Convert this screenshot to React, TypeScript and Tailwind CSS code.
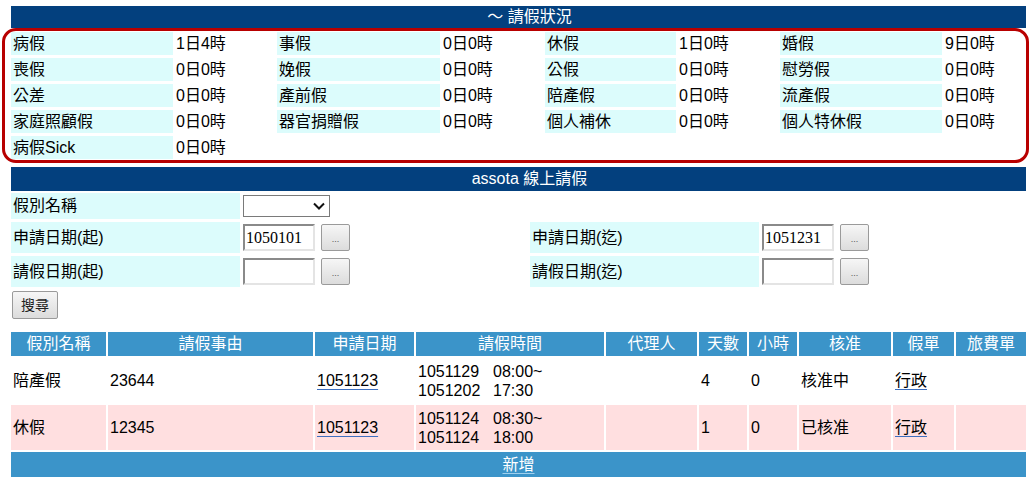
import React from "react";

const font = "font-['Liberation_Sans','Noto_Sans_CJK_TC',sans-serif]";

const balances: [string, string][][] = [
  [["病假", "1日4時"], ["事假", "0日0時"], ["休假", "1日0時"], ["婚假", "9日0時"]],
  [["喪假", "0日0時"], ["娩假", "0日0時"], ["公假", "0日0時"], ["慰勞假", "0日0時"]],
  [["公差", "0日0時"], ["產前假", "0日0時"], ["陪產假", "0日0時"], ["流產假", "0日0時"]],
  [["家庭照顧假", "0日0時"], ["器官捐贈假", "0日0時"], ["個人補休", "0日0時"], ["個人特休假", "0日0時"]],
  [["病假Sick", "0日0時"]],
];

const columns = ["假別名稱", "請假事由", "申請日期", "請假時間", "代理人", "天數", "小時", "核准", "假單", "旅費單"];

const records = [
  { type: "陪產假", reason: "23644", applied: "1051123", from: ["1051129", "08:00~"], to: ["1051202", "17:30"], agent: "", days: "4", hours: "0", status: "核准中", pink: false },
  { type: "休假", reason: "12345", applied: "1051123", from: ["1051124", "08:30~"], to: ["1051124", "18:00"], agent: "", days: "1", hours: "0", status: "已核准", pink: true },
];

function DotButton() {
  return (
    <button
      type="button"
      className="flex h-[27px] w-[29px] items-end justify-center rounded-[2px] border border-[#9a9a9a] bg-gradient-to-b from-[#f6f6f6] to-[#dcdcdc] pb-[6px] text-[9px] leading-none text-[#555]"
    >
      ...
    </button>
  );
}

function DateInput({ value }: { value: string }) {
  return (
    <div className="flex items-center gap-[6px]">
      <input
        readOnly
        value={value}
        className="h-[27px] w-[72px] border-2 border-t-[#8a8a8a] border-l-[#8a8a8a] border-b-[#e4e4e4] border-r-[#e4e4e4] bg-white px-[1px] font-['Liberation_Serif',serif] text-[16px] text-black outline-none"
      />
      <DotButton />
    </div>
  );
}

function FormLabel({ children }: { children: React.ReactNode }) {
  return <div className="flex w-[229px] items-center bg-[#dcfcfc] pl-[2px]">{children}</div>;
}

export default function App() {
  return (
    <div className={`h-[485px] w-[1030px] overflow-hidden bg-white pt-[6px] text-[16px] text-black ${font}`}>
      {/* 請假狀況 */}
      <div className="ml-[11px] mr-[4px] flex h-[22px] items-center justify-center bg-[#03407e] pl-[22px] text-white">
        ～ 請假狀況
      </div>
      <div className="ml-[2px] mr-[1px] h-[135px] rounded-[14px] border-[3px] border-[#b80000] pl-[6px] pt-[1px]">
        <div className="grid grid-cols-[162px_100px_163px_101px_131px_100px_162px_82px] auto-rows-[23px] gap-x-[2px] gap-y-[3px]">
          {balances.map((row) =>
            row.map(([name, value]) => (
              <React.Fragment key={name}>
                <div className="flex items-center bg-[#dcfcfc] pl-[2px]">{name}</div>
                <div className="flex items-center pl-[1px]">{value}</div>
              </React.Fragment>
            ))
          )}
        </div>
      </div>

      {/* 線上請假 */}
      <div className="ml-[11px] mr-[4px] mt-[4px] flex h-[24px] items-center justify-center bg-[#03407e] pl-[22px] text-white">
        assota 線上請假
      </div>
      <div className="ml-[11px] mr-[4px] mt-[2px] flex flex-col gap-[3px]">
        <div className="flex h-[26px] gap-[3px]">
          <FormLabel>假別名稱</FormLabel>
          <div className="flex items-center">
            <div className="flex h-[22px] w-[87px] items-center justify-end border border-[#7a7a7a] bg-white pr-[4px]">
              <svg width="12" height="8" viewBox="0 0 12 8" fill="none" stroke="#111" strokeWidth="2">
                <path d="M1 1.5 6 6.5 11 1.5" />
              </svg>
            </div>
          </div>
        </div>
        <div className="flex h-[31px]">
          <div className="flex w-[519px] gap-[3px]">
            <FormLabel>申請日期(起)</FormLabel>
            <div className="flex items-center">
              <DateInput value="1050101" />
            </div>
          </div>
          <div className="flex gap-[3px]">
            <FormLabel>申請日期(迄)</FormLabel>
            <div className="flex items-center">
              <DateInput value="1051231" />
            </div>
          </div>
        </div>
        <div className="flex h-[31px]">
          <div className="flex w-[519px] gap-[3px]">
            <FormLabel>請假日期(起)</FormLabel>
            <div className="flex items-center">
              <DateInput value="" />
            </div>
          </div>
          <div className="flex gap-[3px]">
            <FormLabel>請假日期(迄)</FormLabel>
            <div className="flex items-center">
              <DateInput value="" />
            </div>
          </div>
        </div>
        <div className="pt-[1px]">
          <button
            type="button"
            className="ml-[1px] h-[28px] w-[46px] rounded-[2px] border border-[#9a9a9a] bg-gradient-to-b from-[#f6f6f6] to-[#dcdcdc] text-[14px] text-[#222]"
          >
            搜尋
          </button>
        </div>
      </div>

      {/* Records */}
      <div className="ml-[11px] mr-[4px] mt-[13px] grid grid-cols-[95px_205px_99px_188px_91px_48px_48px_92px_61px_70px] gap-[2px]">
        {columns.map((c) => (
          <div key={c} className="flex h-[24px] items-center justify-center bg-[#3b94c9] text-white">
            {c}
          </div>
        ))}
        {records.map((r) => {
          const bg = r.pink ? "bg-[#ffdfe0]" : "bg-white";
          const cell = `flex h-[45px] items-center pl-[2px] ${bg}`;
          return (
            <React.Fragment key={r.type}>
              <div className={cell}>{r.type}</div>
              <div className={cell}>{r.reason}</div>
              <div className={cell}>
                <span className="underline decoration-[#3d6fc0] underline-offset-[3px]">{r.applied}</span>
              </div>
              <div className={`flex h-[45px] flex-col justify-center pl-[2px] leading-[19px] ${bg}`}>
                {[r.from, r.to].map(([d, t]) => (
                  <div key={d + t} className="flex">
                    <span className="w-[75px]">{d}</span>
                    <span>{t}</span>
                  </div>
                ))}
              </div>
              <div className={cell}>{r.agent}</div>
              <div className={cell}>{r.days}</div>
              <div className={cell}>{r.hours}</div>
              <div className={cell}>{r.status}</div>
              <div className={cell}>
                <span className="underline decoration-[#3d6fc0] underline-offset-[3px]">行政</span>
              </div>
              <div className={cell}></div>
            </React.Fragment>
          );
        })}
        <div className="col-span-10 flex h-[25px] items-center justify-center bg-[#3b94c9] text-white">
          <span className="underline decoration-[#9fd0ee] underline-offset-[3px]">新增</span>
        </div>
      </div>
    </div>
  );
}
